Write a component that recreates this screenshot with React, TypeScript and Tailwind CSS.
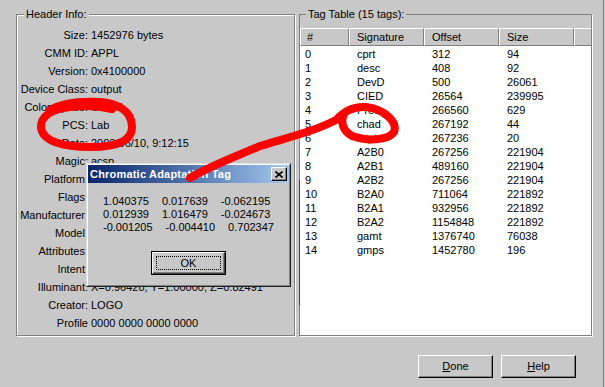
import React from "react";

const headerRows: [string, string][] = [
  ["Size:", "1452976 bytes"],
  ["CMM ID:", "APPL"],
  ["Version:", "0x4100000"],
  ["Device Class:", "output"],
  ["Color Space:", "CMYK"],
  ["PCS:", "Lab"],
  ["Date:", "2003/06/10, 9:12:15"],
  ["Magic:", "acsp"],
  ["Platform:", "APPL"],
  ["Flags:", "0"],
  ["Manufacturer:", "APPL"],
  ["Model:", "0"],
  ["Attributes:", "0"],
  ["Intent:", "0"],
  ["Illuminant:", "X=0.96420, Y=1.00000, Z=0.82491"],
  ["Creator:", "LOGO"],
  ["Profile", "0000 0000 0000 0000"],
];

const tags: [string, string, string, string][] = [
  ["0", "cprt", "312", "94"],
  ["1", "desc", "408", "92"],
  ["2", "DevD", "500", "26061"],
  ["3", "CIED", "26564", "239995"],
  ["4", "Pre0", "266560", "629"],
  ["5", "chad", "267192", "44"],
  ["6", "wtpt", "267236", "20"],
  ["7", "A2B0", "267256", "221904"],
  ["8", "A2B1", "489160", "221904"],
  ["9", "A2B2", "267256", "221904"],
  ["10", "B2A0", "711064", "221892"],
  ["11", "B2A1", "932956", "221892"],
  ["12", "B2A2", "1154848", "221892"],
  ["13", "gamt", "1376740", "76038"],
  ["14", "gmps", "1452780", "196"],
];

const matrix = [
  ["1.040375", "0.017639", "-0.062195"],
  ["0.012939", "1.016479", "-0.024673"],
  ["-0.001205", "-0.004410", "0.702347"],
];

function HeaderCell({ label, w, pl }: { label: string; w: string; pl: string }) {
  return (
    <div
      className={`${w} ${pl} h-[18px] flex items-center border-t border-l border-t-white border-l-white border-r border-b border-r-[#808080] border-b-[#808080] bg-[#c8c8c8] whitespace-nowrap`}
    >
      {label}
    </div>
  );
}

function Button({ children }: { children: React.ReactNode }) {
  return (
    <div className="w-[75px] h-[23px] border border-t-white border-l-white border-r-black border-b-black shadow-[inset_-1px_-1px_0_#808080] flex items-center justify-center">
      {children}
    </div>
  );
}

export default function App() {
  return (
    <div className="w-[605px] h-[387px] bg-[#c8c8c8] overflow-hidden font-['Liberation_Sans',Arial,sans-serif] text-[11px] leading-[13px] text-black">
      <div className="relative w-[604px] h-full border-r border-[#808080] flex flex-col">
        <div className="flex pt-[14px] pl-[16px] gap-[4px]">
          {/* Header Info group */}
          <div className="relative w-[279px] h-[322px] border border-[#808080] shadow-[inset_1px_1px_0_#fff,1px_1px_0_#fff] pt-[11px]">
            <span className="absolute left-[7px] top-[-7px] px-[2px] bg-[#c8c8c8]">Header Info:</span>
            {headerRows.map(([l, v]) => (
              <div key={l} className="flex h-[18px] items-center whitespace-nowrap">
                <div className="w-[71px] text-right">{l}</div>
                <div className="pl-[3px]">{v}</div>
              </div>
            ))}
          </div>

          {/* Tag Table group */}
          <div className="relative w-[293px] h-[322px] border border-[#808080] shadow-[1px_1px_0_#fff] pt-[13px] flex flex-col">
            <span className="absolute left-[6px] top-[-7px] px-[2px] bg-[#c8c8c8]">Tag Table (15 tags):</span>
            <div className="flex-1 bg-white flex flex-col">
              <div className="flex">
                <HeaderCell label="#" w="w-[49px]" pl="pl-[6px]" />
                <HeaderCell label="Signature" w="w-[75px]" pl="pl-[7px]" />
                <HeaderCell label="Offset" w="w-[75px]" pl="pl-[7px]" />
                <HeaderCell label="Size" w="w-[75px]" pl="pl-[7px]" />
                <div className="flex-1 h-[18px] border-t border-l border-t-white border-l-white border-b border-b-[#808080] bg-[#c8c8c8]" />
              </div>
              <div className="pt-[1px]">
                {tags.map(([n, s, o, z]) => (
                  <div key={n} className="flex h-[14px] items-center whitespace-nowrap">
                    <div className="w-[49px] pl-[5px]">{n}</div>
                    <div className="w-[75px] pl-[8px]">{s}</div>
                    <div className="w-[75px] pl-[8px]">{o}</div>
                    <div className="w-[75px] pl-[8px]">{z}</div>
                  </div>
                ))}
              </div>
            </div>
          </div>
        </div>

        {/* Bottom buttons */}
        <div className="flex justify-end gap-[8px] pr-[27px] mt-[19px]">
          <Button>
            <span>
              <span className="underline">D</span>one
            </span>
          </Button>
          <Button>
            <span>
              <span className="underline">H</span>elp
            </span>
          </Button>
        </div>

        {/* artifact line at list's left edge */}
        <div className="absolute left-[299px] top-[180px] w-px h-[125px] bg-[#404040]" />

        {/* Chromatic Adaptation Tag dialog */}
        <div className="absolute left-[86px] top-[163px] w-[205px] h-[124px] border border-t-[#dfdfdf] border-l-[#dfdfdf] border-r-[#202020] border-b-[#202020] bg-[#c8c8c8]">
          <div className="h-full border border-t-white border-l-white border-r-[#808080] border-b-[#808080] flex flex-col">
            <div className="h-[18px] flex items-center justify-between pl-[2px] pr-[2px] bg-gradient-to-r from-[#0a246a] to-[#a6caf0]">
              <span className="text-white font-bold text-[11px] tracking-[0.2px] whitespace-nowrap">Chromatic Adaptation Tag</span>
              <div className="w-[16px] h-[14px] border border-t-white border-l-white border-r-black border-b-black shadow-[inset_-1px_-1px_0_#808080] bg-[#c8c8c8] flex items-center justify-center">
                <svg width="8" height="7" viewBox="0 0 8 7">
                  <path d="M0.5 0.5 L7.5 6.5 M7.5 0.5 L0.5 6.5" stroke="black" strokeWidth="1.6" />
                </svg>
              </div>
            </div>
            <div className="mt-[12px] pl-[15px]">
              {matrix.map((r, i) => (
                <div key={i} className="flex gap-[13px] h-[13px] items-center whitespace-nowrap">
                  {r.map((c, j) => (
                    <span key={j}>{c}</span>
                  ))}
                </div>
              ))}
            </div>
            <div className="mt-[17px] mx-auto w-[75px] h-[24px] border border-black">
              <div className="w-full h-full border border-t-white border-l-white border-r-[#404040] border-b-[#404040] shadow-[inset_-1px_-1px_0_#808080] p-[3px]">
                <div className="w-full h-full border border-dotted border-black flex items-center justify-center">
                  OK
                </div>
              </div>
            </div>
          </div>
        </div>

        {/* red annotations */}
        <svg className="absolute inset-0 pointer-events-none" width="605" height="387" viewBox="0 0 605 387">
          <path
            d="M50 110 C62 103, 82 101, 100 102 C116 103, 132 110, 132 127 C132 142, 115 147, 90 147 C65 147, 43 142, 41 128 C40 116, 52 109, 70 107 C86 105, 100 106, 112 109"
            fill="none"
            stroke="#ff0000"
            strokeWidth="8"
            strokeLinecap="round"
            strokeLinejoin="round"
          />
          <path
            d="M190 178 C210 166, 232 158, 260 146 C290 137, 315 131, 336 120 C344 112, 352 106, 366 107 C384 109, 398 122, 394 132 C388 141, 366 141, 352 136 C343 131, 340 122, 344 114"
            fill="none"
            stroke="#ff0000"
            strokeWidth="8"
            strokeLinecap="round"
            strokeLinejoin="round"
          />
        </svg>
      </div>
    </div>
  );
}
